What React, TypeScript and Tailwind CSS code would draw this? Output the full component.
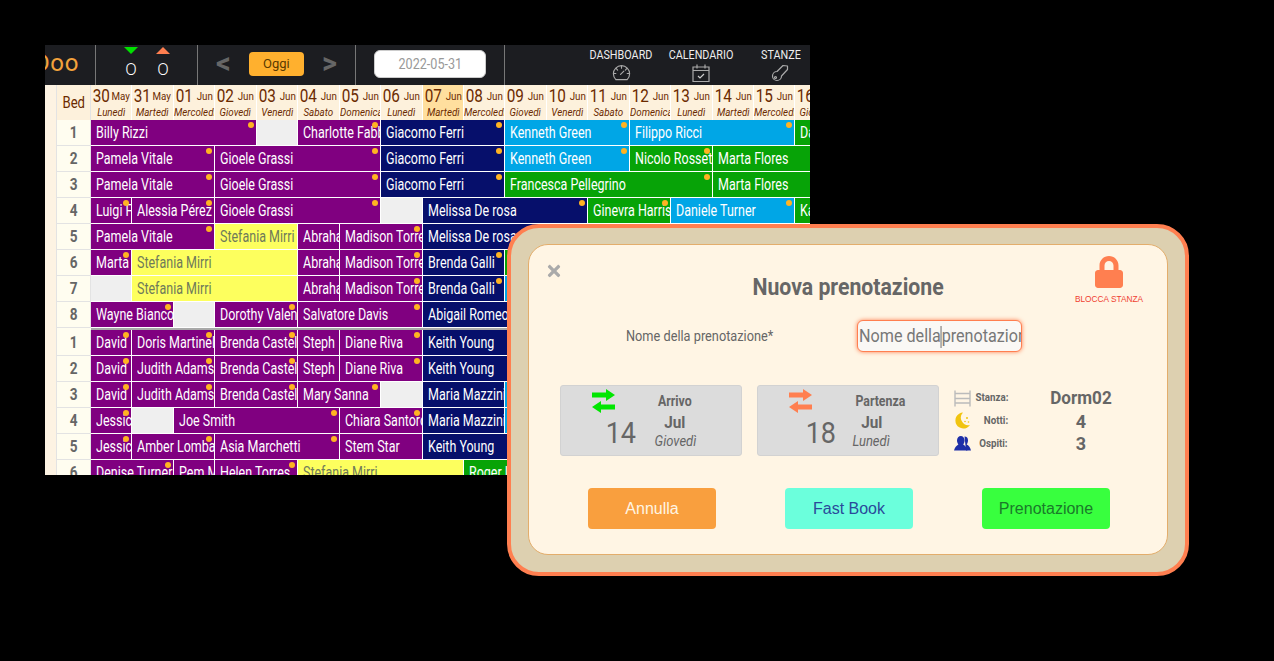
import { FaLock, FaTimes } from 'react-icons/fa'

type Tone = 'p' | 'n' | 'b' | 'g' | 'y' | 'e'
type Booking = [string, number, Tone, boolean?]

const tones: Record<Tone, string> = {
  p: 'bg-[#800080] text-white',
  n: 'bg-[#060f6b] text-white',
  b: 'bg-[#00a6e6] text-white',
  g: 'bg-[#07a307] text-white',
  y: 'bg-[#fdff5e] text-[#6f7a5a]',
  e: 'bg-[#efefef]',
}

const days = [
  ['30', 'May', 'Lunedì'], ['31', 'May', 'Martedì'], ['01', 'Jun', 'Mercoledì'], ['02', 'Jun', 'Giovedì'],
  ['03', 'Jun', 'Venerdì'], ['04', 'Jun', 'Sabato'], ['05', 'Jun', 'Domenica'], ['06', 'Jun', 'Lunedì'],
  ['07', 'Jun', 'Martedì'], ['08', 'Jun', 'Mercoledì'], ['09', 'Jun', 'Giovedì'], ['10', 'Jun', 'Venerdì'],
  ['11', 'Jun', 'Sabato'], ['12', 'Jun', 'Domenica'], ['13', 'Jun', 'Lunedì'], ['14', 'Jun', 'Martedì'],
  ['15', 'Jun', 'Mercoledì'], ['16', 'Jun', 'Giovedì'],
]

const topRooms: Booking[][] = [
  [['Billy Rizzi', 4, 'p', true], ['', 1, 'e'], ['Charlotte Fabbri', 2, 'p', true], ['Giacomo Ferri', 3, 'n', true], ['Kenneth Green', 3, 'b', true], ['Filippo Ricci', 4, 'b', true], ['Dario', 1, 'g']],
  [['Pamela Vitale', 3, 'p', true], ['Gioele Grassi', 4, 'p', true], ['Giacomo Ferri', 3, 'n', true], ['Kenneth Green', 3, 'b', true], ['Nicolo Rossetti', 2, 'g', true], ['Marta Flores', 3, 'g']],
  [['Pamela Vitale', 3, 'p', true], ['Gioele Grassi', 4, 'p', true], ['Giacomo Ferri', 3, 'n', true], ['Francesca Pellegrino', 5, 'g', true], ['Marta Flores', 3, 'g']],
  [['Luigi Ferri', 1, 'p', true], ['Alessia Pérez', 2, 'p', true], ['Gioele Grassi', 4, 'p', true], ['', 1, 'e'], ['Melissa De rosa', 4, 'n', true], ['Ginevra Harris', 2, 'g', true], ['Daniele Turner', 3, 'b', true], ['Katia', 1, 'g']],
  [['Pamela Vitale', 3, 'p', true], ['Stefania Mirri', 2, 'y'], ['Abraham', 1, 'p'], ['Madison Torres', 2, 'p', true], ['Melissa De rosa', 4, 'n', true]],
  [['Marta', 1, 'p', true], ['Stefania Mirri', 4, 'y'], ['Abraham', 1, 'p'], ['Madison Torres', 2, 'p', true], ['Brenda Galli', 2, 'n', true], ['', 2, 'g']],
  [['', 1, 'e'], ['Stefania Mirri', 4, 'y'], ['Abraham', 1, 'p'], ['Madison Torres', 2, 'p', true], ['Brenda Galli', 2, 'n', true], ['', 2, 'b']],
  [['Wayne Bianco', 2, 'p', true], ['', 1, 'e'], ['Dorothy Valente', 2, 'p', true], ['Salvatore Davis', 3, 'p', true], ['Abigail Romeo', 4, 'n']],
]

const bottomRooms: Booking[][] = [
  [['David', 1, 'p', true], ['Doris Martinelli', 2, 'p', true], ['Brenda Castelli', 2, 'p', true], ['Steph', 1, 'p'], ['Diane Riva', 2, 'p', true], ['Keith Young', 4, 'n']],
  [['David', 1, 'p', true], ['Judith Adams', 2, 'p', true], ['Brenda Castelli', 2, 'p', true], ['Steph', 1, 'p'], ['Diane Riva', 2, 'p', true], ['Keith Young', 4, 'n']],
  [['David', 1, 'p', true], ['Judith Adams', 2, 'p', true], ['Brenda Castelli', 2, 'p', true], ['Mary Sanna', 2, 'p', true], ['', 1, 'e'], ['Maria Mazzini', 2, 'n'], ['', 2, 'b']],
  [['Jessica', 1, 'p', true], ['', 1, 'e'], ['Joe Smith', 4, 'p', true], ['Chiara Santoro', 2, 'p', true], ['Maria Mazzini', 2, 'n'], ['', 2, 'b']],
  [['Jessica', 1, 'p', true], ['Amber Lombardi', 2, 'p', true], ['Asia Marchetti', 3, 'p', true], ['Stem Star', 2, 'p'], ['Keith Young', 4, 'n']],
  [['Denise Turner', 2, 'p', true], ['Pem M', 1, 'p'], ['Helen Torres', 2, 'p', true], ['Stefania Mirri', 4, 'y'], ['Roger Lee', 3, 'g']],
]

function Row({ label, bookings }: { label: number; bookings: Booking[] }) {
  return (
    <div className="flex h-[26px]">
      <div className="w-3 shrink-0 border-r border-[#e3e3e3] bg-[#fdf3e3]" />
      <div className="flex w-[34px] shrink-0 items-center justify-center border-r border-b border-[#e3e3e3] bg-[#fffdf0] text-[16px] font-bold text-[#666]">
        <span className="inline-block scale-x-[0.85]">{label}</span>
      </div>
      <div className="grid grid-cols-[repeat(18,41.45px)]">
        {bookings.map(([name, span, tone, dot], i) => (
          <div
            key={i}
            style={{ gridColumn: `span ${span}` }}
            className={`relative flex items-center overflow-hidden whitespace-nowrap border-r border-b border-white pl-[5px] pt-[1px] text-[16px] ${tones[tone]}`}
          >
            <span className="inline-block origin-left scale-x-[0.78]">{name}</span>
            {dot && <span className="absolute right-[2px] top-[2px] size-[6px] rounded-full bg-[#ffb322]" />}
          </div>
        ))}
      </div>
    </div>
  )
}

function NavLink({ label, children }: { label: string; children: React.ReactNode }) {
  return (
    <div className="flex w-20 shrink-0 flex-col items-center text-[13px] leading-[16px] text-[#eee]">
      <span className="inline-block scale-x-[0.83] whitespace-nowrap">{label}</span>
      {children}
    </div>
  )
}

function Scheduler() {
  return (
    <div className="h-[430px] w-[765px] overflow-hidden">
      {/* Toolbar */}
      <div className="flex h-10 items-stretch bg-[#1c1d21]">
        <div className="w-[51px] shrink-0 overflow-hidden border-r border-[#777]">
          <span className="-ml-[11px] block text-[24px] leading-[36px] tracking-wide text-[#f3a23c]">Doo</span>
        </div>
        <div className="flex w-[102px] shrink-0 justify-center gap-[18px] border-r border-[#777] pl-[1px]">
          <div className="flex flex-col items-center">
            <span className="mt-[2px] size-0 border-x-[7px] border-t-[7px] border-x-transparent border-t-[#00e000]" />
            <span className="mt-[6px] text-[17px] font-light leading-[18px] text-white">O</span>
          </div>
          <div className="flex flex-col items-center">
            <span className="mt-[2px] size-0 border-x-[7px] border-b-[7px] border-x-transparent border-b-[#ff7f50]" />
            <span className="mt-[6px] text-[17px] font-light leading-[18px] text-white">O</span>
          </div>
        </div>
        <div className="flex w-[158px] shrink-0 items-center justify-between border-r border-[#777] px-[18px]">
          <span className="-mt-[3px] text-[29px] font-bold text-[#666]">&lt;</span>
          <button className="mt-[-2px] h-6 w-[55px] rounded bg-[#ffb02e] text-[13px] text-[#5a3a00]">Oggi</button>
          <span className="-mt-[3px] text-[29px] font-bold text-[#666]">&gt;</span>
        </div>
        <div className="flex w-[149px] shrink-0 items-center justify-center border-r border-[#777]">
          <div className="mt-[-2px] flex h-7 w-[112px] items-center justify-center rounded-md border border-[#ccc] bg-white text-[14px] text-[#999]">
            <span className="inline-block scale-x-90">2022-05-31</span>
          </div>
        </div>
        <div className="flex min-w-0 flex-1 overflow-hidden pl-[76px] pt-[2px]">
          <NavLink label="DASHBOARD">
            <svg viewBox="0 0 20 18" className="mt-[1px] h-[17px] w-[19px]" fill="none" stroke="#aaa" strokeWidth="1.2" strokeLinecap="round">
              <path d="M4 16.500h12a8.600 8.600 0 1 0-12 0z" />
              <path d="M2 10h2M16 10h2M10 2.500v2M4.500 5l1.400 1.400M15.500 5l-1.400 1.400M9 11l3.500-3.500" />
            </svg>
          </NavLink>
          <NavLink label="CALENDARIO">
            <svg viewBox="0 0 18 18" className="mt-[1px] size-[18px]" fill="none" stroke="#aaa" strokeWidth="1.2">
              <path d="M1 3h16v14.500H1zM1 6.500h16M5 .5v4M13 .5v4" />
              <path d="M6 12l2 2 4-4" stroke="#ccc" />
            </svg>
          </NavLink>
          <NavLink label="STANZE">
            <svg viewBox="0 0 18 18" className="ml-[-3px] mt-[1px] size-[18px]" fill="none" stroke="#aaa" strokeWidth="1.2" strokeLinejoin="round">
              <path d="M12 1.500l4.500 0.500 0 3.500-6 6.500a4.500 4.500 0 1 1-4.500-4.500z" />
              <circle cx="4.500" cy="13.500" r="1" />
            </svg>
          </NavLink>
        </div>
      </div>

      {/* Day header */}
      <div className="flex h-[35px]">
        <div className="w-3 shrink-0 border-r border-[#e3e3e3] bg-[#fdf3e3]" />
        <div className="flex w-[34px] shrink-0 items-center justify-center border-r border-[#e3e3e3] bg-[#fdf1dc] text-[16px] text-[#6b2a00]">
          <span className="inline-block scale-x-[0.82]">Bed</span>
        </div>
        <div className="grid grid-cols-[repeat(18,41.45px)]">
          {days.map(([num, month, weekday]) => (
            <div
              key={num + month}
              className={`overflow-hidden whitespace-nowrap border-r border-white text-[#6b2a00] ${num === '07' ? 'bg-[#ffdf9e]' : 'bg-[#fdf1dc]'}`}
            >
              <div className="flex h-[21px] w-[118%] origin-left scale-x-[0.85] items-center justify-between pl-[2px] pr-[2px]">
                <span className="text-[18px] leading-5">{num}</span>
                <span className="text-[11.500px] leading-5">{month}</span>
              </div>
              <div className="w-[118%] origin-left scale-x-[0.85] overflow-hidden text-center text-[11.500px] italic leading-[12px]">
                {weekday}
              </div>
            </div>
          ))}
        </div>
      </div>

      {topRooms.map((bookings, i) => <Row key={i} label={i + 1} bookings={bookings} />)}
      <div className="flex h-[2px]">
        <div className="w-3 shrink-0 border-r border-[#e3e3e3] bg-[#fdf3e3]" />
        <div className="w-[34px] shrink-0 bg-[#fffdf0]" />
        <div className="flex-1 bg-[#a9a9a9]" />
      </div>
      {bottomRooms.map((bookings, i) => <Row key={i} label={i + 1} bookings={bookings} />)}
    </div>
  )
}

function SwapArrows({ className }: { className: string }) {
  return (
    <svg viewBox="0 0 23 24" className={className} fill="currentColor">
      <path d="M0 3.500h14V0l9 6-9 6V8.500H0z" />
      <path d="M23 15.500H9V12l-9 6 9 6v-3.500h14z" />
    </svg>
  )
}

function DateCard({ icon, title, month, day, weekday, shifted }: { icon: React.ReactNode; title: string; month: string; day: string; weekday: string; shifted?: boolean }) {
  return (
    <div className="flex h-[71px] w-[182px] rounded-[3px] border border-[#d2d2d2] bg-[#dcdcdc] text-[#666]">
      <div className="flex w-[90px] shrink-0 flex-col items-start">
        <div className="ml-[31px] mt-[3px] h-[24px]">{icon}</div>
        <span className={`mt-[2px] inline-block scale-x-90 text-[30px] leading-[36px] ${shifted ? 'ml-[46px]' : 'ml-[43px]'}`}>{day}</span>
      </div>
      <div className="flex w-[48px] flex-col items-center">
        <span className={`mt-[5px] inline-block scale-x-[0.85] whitespace-nowrap text-[14.500px] font-bold leading-[21px] ${shifted ? 'ml-[16px]' : ''}`}>{title}</span>
        <span className="inline-block scale-x-90 text-[17px] font-bold leading-[20px]">{month}</span>
        <span className={`inline-block scale-x-[0.93] whitespace-nowrap text-[14px] italic leading-[18px] ${shifted ? 'ml-[-2px]' : ''}`}>{weekday}</span>
      </div>
    </div>
  )
}

function Info({ icon, label }: { icon: React.ReactNode; label: string }) {
  return (
    <div className="flex items-center justify-between">
      {icon}
      <span className="inline-block origin-right scale-x-[0.93] text-[10.500px] font-bold">{label}</span>
    </div>
  )
}

function Modal() {
  return (
    <div className="absolute left-[507px] top-[224px] h-[352px] w-[682px] rounded-[32px] border-[4px] border-[#ff7f50] bg-[#ddd0b0] px-[17px] pb-[16px] pt-[16px]">
      <div className="relative h-[311px] rounded-[20px] border border-[#e3ad6b] bg-[#fff5e4]">
        <FaTimes className="absolute left-[16px] top-[17px] size-[18px] text-[#aaa]" />
        <h2 className="pt-[27px] text-center text-[24px] font-bold leading-[30px] text-[#666]">
          <span className="inline-block scale-x-[0.885]">Nuova prenotazione</span>
        </h2>
        <div className="absolute right-[23px] top-[11px] flex w-[70px] flex-col items-center">
          <FaLock className="size-[32px] text-[#ff7f50]" />
          <span className="mt-[5px] whitespace-nowrap text-[8.300px] text-[#f04030] [font-family:'Liberation_Sans',sans-serif]">BLOCCA STANZA</span>
        </div>
        <div className="mt-[18px] flex items-center pl-[97px]">
          <span className="w-[231px] shrink-0 origin-left scale-x-[0.85] whitespace-nowrap text-[15px] text-[#666]">Nome della prenotazione*</span>
          <div className="h-[32px] w-[165px] overflow-hidden whitespace-nowrap rounded-[6px] border border-[#ff7f50] bg-[#faf8f5] pl-[1px] text-[19px] leading-[30px] text-[#777] shadow-[0_0_4px_#ff7f50]">
            <span className="inline-block origin-left scale-x-[0.85]">
              Nome della<span className="inline-block h-[22px] w-px bg-[#555] align-middle" />prenotazione
            </span>
          </div>
        </div>
        <div className="mt-[33px] flex pl-[31px]">
          <DateCard icon={<SwapArrows className="h-[24px] w-[23px] text-[#00e600]" />} title="Arrivo" month="Jul" day="14" weekday="Giovedì" />
          <div className="w-[15px]" />
          <DateCard icon={<SwapArrows className="h-[24px] w-[23px] text-[#ff7f50]" />} title="Partenza" month="Jul" day="18" weekday="Lunedì" shifted />
          <div className="ml-[15px] grid h-[70px] grid-cols-[54px_146px] grid-rows-3 items-center pt-[2px] text-[#666]">
            <Info
              icon={
                <svg viewBox="0 0 17 16" className="size-[17px]" fill="none" stroke="#bbb" strokeWidth="1.400">
                  <path d="M1 0v16M16 0v16M1 3h15M1 8h15M1 12.500h15" />
                </svg>
              }
              label="Stanza:"
            />
            <span className="scale-x-90 text-center text-[19px] font-bold">Dorm02</span>
            <Info
              icon={
                <svg viewBox="0 0 17 17" className="size-[17px]">
                  <path d="M9 0.500a8 8 0 1 0 7 12.500 7.500 7.500 0 0 1-7-12.500z" fill="#f1c40f" />
                  <circle cx="13" cy="6" r="1" fill="#f1c40f" />
                  <circle cx="11" cy="9.500" r="0.800" fill="#f1c40f" />
                  <circle cx="14.500" cy="10" r="0.800" fill="#f1c40f" />
                </svg>
              }
              label="Notti:"
            />
            <span className="text-center text-[18px] font-bold">4</span>
            <Info
              icon={
                <svg viewBox="0 0 17 16" className="size-[17px]" fill="#1e2fa8">
                  <path d="M10.500 1a3.500 4 0 0 1 3.500 4c0 1.500-.7 3-1.300 4 1.800 1 3.500 2.500 4.300 6h-5z" />
                  <path d="M3 5a3.800 4.500 0 0 1 7.600 0c0 1.600-.8 3-1.400 4 2 1 3.600 3 4.200 6H0c.7-3 2.500-5 4.400-6C3.800 8 3 6.600 3 5z" />
                </svg>
              }
              label="Ospiti:"
            />
            <span className="text-center text-[18px] font-bold">3</span>
          </div>
        </div>
        <div className="mt-[32px] flex justify-between pl-[59px] pr-[57px] text-[16px] [font-family:'Liberation_Sans',sans-serif]">
          <button className="h-[41px] w-[128px] rounded bg-[#f99f3e] text-[#fff5e4]">Annulla</button>
          <button className="h-[41px] w-[128px] rounded bg-[#6bffdc] text-[#2a4a9a]">Fast Book</button>
          <button className="h-[41px] w-[128px] rounded bg-[#38ff3e] text-[#1a7a2a]">Prenotazione</button>
        </div>
      </div>
    </div>
  )
}

export default function App() {
  return (
    <div className="relative h-[661px] w-[1274px] overflow-hidden bg-black pl-[45px] pt-[45px] [font-family:Roboto,sans-serif]">
      <Scheduler />
      <Modal />
    </div>
  )
}
